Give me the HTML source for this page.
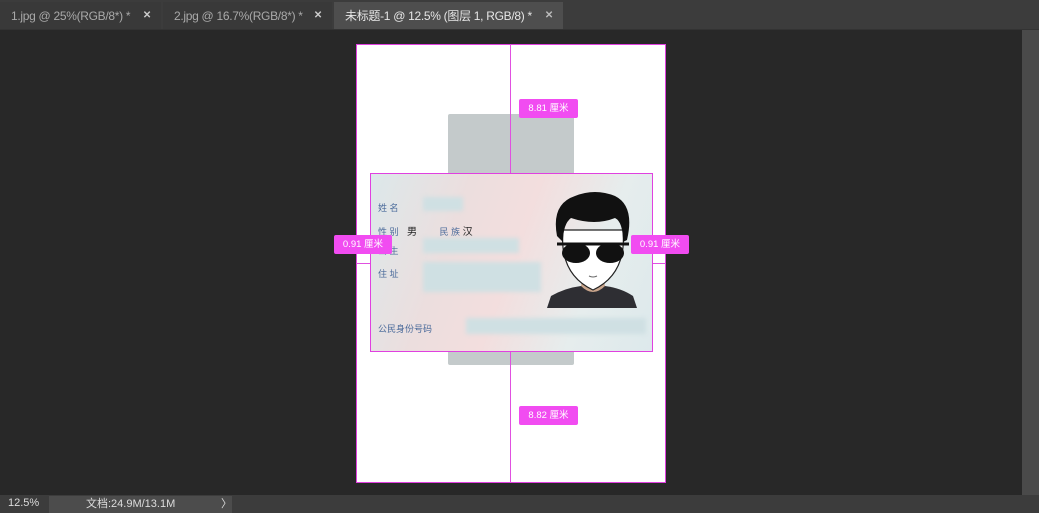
<!DOCTYPE html>
<html><head><meta charset="utf-8"><style>
*{margin:0;padding:0;box-sizing:border-box}
body{width:1039px;height:513px;background:#282828;position:relative;overflow:hidden;font-family:"Liberation Sans","Noto Sans CJK SC",sans-serif}
.a{position:absolute}
.tab{position:absolute;top:2px;height:27px;color:#a9a9a9;font-size:12px;letter-spacing:-0.3px;line-height:28px;padding-left:11px;white-space:nowrap}
.x{position:absolute;right:10px;top:0;font-weight:bold;font-size:10px}
.lab{position:absolute;background:#f14cf1;color:#fff;font-size:9.5px;line-height:19px;height:19px;text-align:center;border-radius:2px}
.cl{position:absolute;color:#4a6a9a;font-size:9px}
.blur{position:absolute;background:#cfe0e3;filter:blur(2px)}
</style></head><body>
<div class="a" style="left:0;top:0;width:1039px;height:30px;background:#3c3c3c;border-bottom:1px solid #333"></div>
<div class="tab" style="left:0;width:161px;background:#393939">1.jpg @ 25%(RGB/8*) *<span class="x" style="color:#ccc">✕</span></div>
<div class="tab" style="left:163px;width:169px;background:#393939">2.jpg @ 16.7%(RGB/8*) *<span class="x" style="color:#ccc">✕</span></div>
<div class="tab" style="left:334px;width:229px;background:#4e4e4e;color:#e6e6e6">未标题-1 @ 12.5% (图层 1, RGB/8) *<span class="x" style="color:#bbb">✕</span></div>
<div class="a" style="left:1022px;top:30px;width:17px;height:465px;background:#4a4a4a"></div>
<div class="a" style="left:356px;top:44px;width:310px;height:439px;background:#fff;border:1px solid #e040e0"></div>
<div class="a" style="left:448px;top:114px;width:126px;height:251px;background:#c4cacb;border-radius:2px"></div>
<div class="a" style="left:370px;top:173px;width:283px;height:179px;border:1px solid #e040e0;background:linear-gradient(110deg,#dce8ea 0%,#ecdede 30%,#f3dede 50%,#e6eded 75%,#dde9ec 100%);overflow:hidden">
 <div class="cl" style="left:7px;top:27px">姓 名</div>
 <div class="cl" style="left:7px;top:49px">性 别 <span style="color:#222;font-size:10px;margin-left:6px">男</span> <span style="margin-left:20px">民 族</span> <span style="color:#222;font-size:10px">汉</span></div>
 <div class="cl" style="left:7px;top:70px">出 生</div>
 <div class="cl" style="left:7px;top:93px">住 址</div>
 <div class="cl" style="left:7px;top:148px">公民身份号码</div>
 <div class="blur" style="left:52px;top:23px;width:40px;height:14px"></div>
 <div class="blur" style="left:52px;top:64px;width:96px;height:15px"></div>
 <div class="blur" style="left:52px;top:88px;width:118px;height:30px"></div>
 <div class="blur" style="left:95px;top:144px;width:180px;height:16px"></div>
 <svg class="a" style="left:174px;top:16px" width="96" height="120" viewBox="0 0 96 120">
  <path d="M2 118 L6 106 Q20 98 36 96 L60 96 Q76 98 88 106 L92 118Z" fill="#2e2e33"/>
  <path d="M36 96 Q48 108 60 96 L58 86 L38 86Z" fill="#c9a58c"/>
  <path d="M18 40 Q14 84 48 100 Q82 84 78 40 Z" fill="#fff" stroke="#222" stroke-width="1.2"/>
  <path d="M12 46 Q6 14 30 6 Q50 -2 70 6 Q90 16 82 50 L78 52 Q78 32 70 28 Q50 36 26 28 Q18 34 18 52Z" fill="#111"/>
  <path d="M12 54 L84 54" stroke="#111" stroke-width="3"/>
  <ellipse cx="31" cy="63" rx="14" ry="10" fill="#111"/>
  <ellipse cx="65" cy="63" rx="14" ry="10" fill="#111"/>
  <path d="M44 86 Q48 88 52 86" stroke="#666" fill="none"/>
 </svg>
</div>
<div class="a" style="left:510px;top:44px;width:1px;height:129px;background:#e050e0"></div>
<div class="a" style="left:510px;top:352px;width:1px;height:131px;background:#e050e0"></div>
<div class="a" style="left:356px;top:263px;width:14px;height:1px;background:#e050e0"></div>
<div class="a" style="left:653px;top:263px;width:13px;height:1px;background:#e050e0"></div>
<div class="lab" style="left:519px;top:99px;width:59px">8.81 厘米</div>
<div class="lab" style="left:334px;top:235px;width:58px">0.91 厘米</div>
<div class="lab" style="left:631px;top:235px;width:58px">0.91 厘米</div>
<div class="lab" style="left:519px;top:406px;width:59px">8.82 厘米</div>
<div class="a" style="left:0;top:495px;width:1039px;height:18px;background:#3c3c3c"></div>
<div class="a" style="left:8px;top:497px;color:#ddd;font-size:11px">12.5%</div>
<div class="a" style="left:49px;top:496px;width:183px;height:17px;background:#4c4c4c;color:#ddd;font-size:11px;line-height:17px;padding-left:37px">文档:24.9M/13.1M<span style="position:absolute;left:172px">〉</span></div>
</body></html>
